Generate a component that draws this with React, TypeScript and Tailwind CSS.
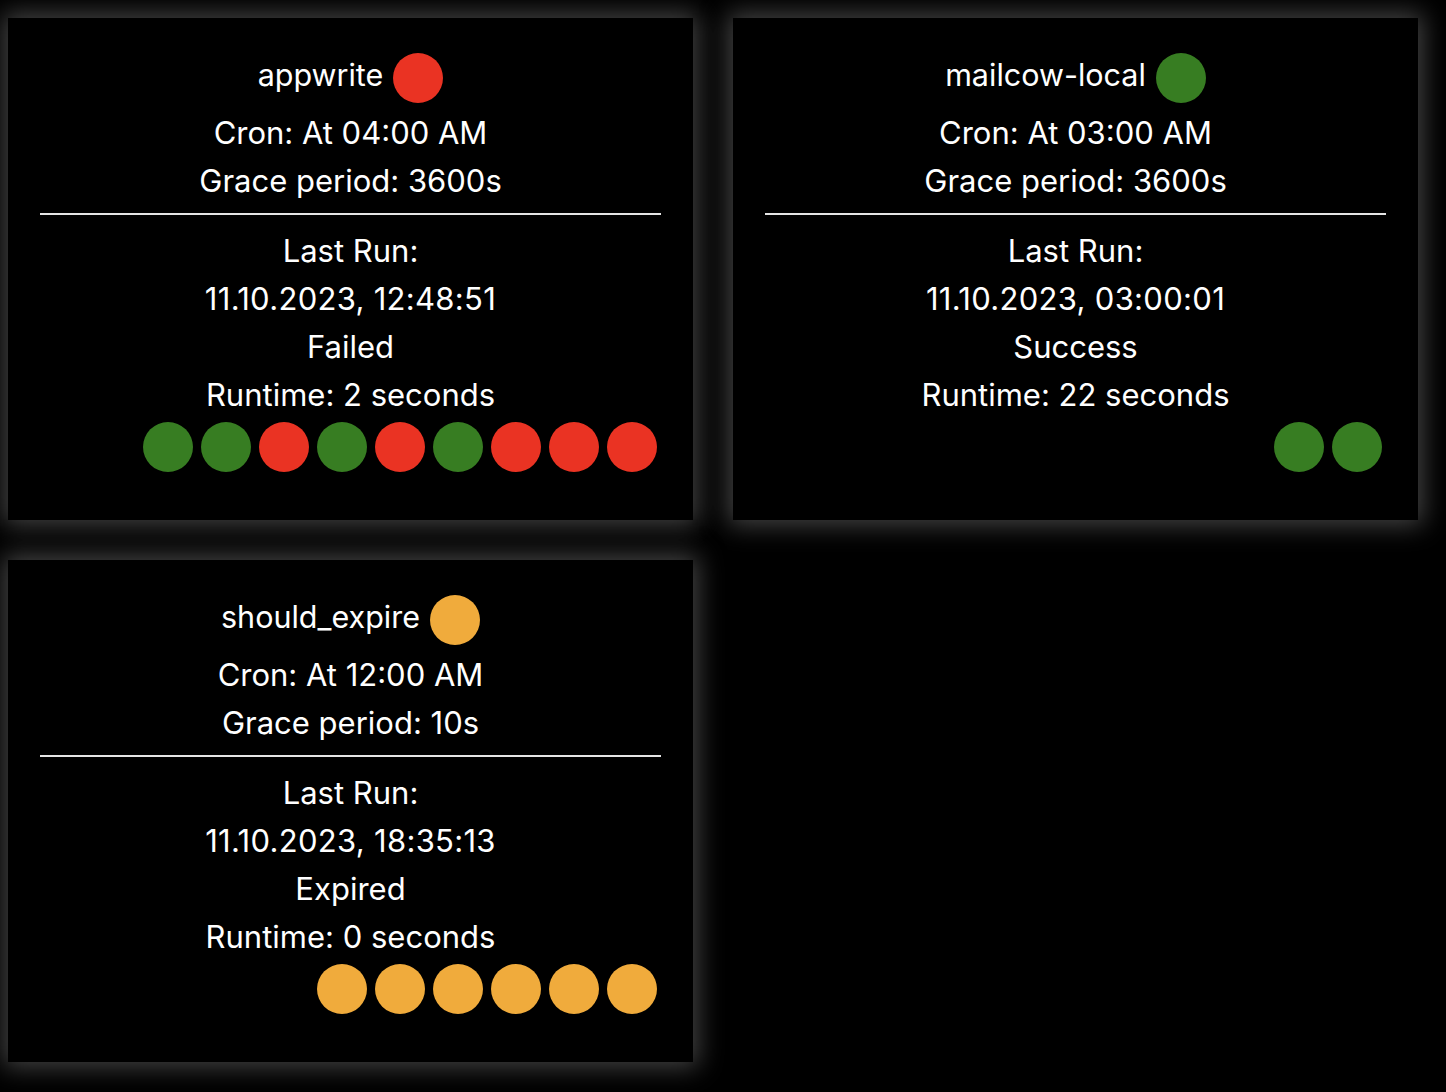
import React from "react";

type S = "ok" | "fail" | "exp";
const color: Record<S, string> = {
  ok: "bg-[#377d22]",
  fail: "bg-[#ea3323]",
  exp: "bg-[#f0ab3c]",
};

type Job = {
  name: string;
  status: S;
  cron: string;
  grace: string;
  last: string;
  result: string;
  runtime: string;
  history: S[];
};

const jobs: Job[] = [
  {
    name: "appwrite",
    status: "fail",
    cron: "Cron: At 04:00 AM",
    grace: "Grace period: 3600s",
    last: "11.10.2023, 12:48:51",
    result: "Failed",
    runtime: "Runtime: 2 seconds",
    history: ["ok", "ok", "fail", "ok", "fail", "ok", "fail", "fail", "fail"],
  },
  {
    name: "mailcow-local",
    status: "ok",
    cron: "Cron: At 03:00 AM",
    grace: "Grace period: 3600s",
    last: "11.10.2023, 03:00:01",
    result: "Success",
    runtime: "Runtime: 22 seconds",
    history: ["ok", "ok"],
  },
  {
    name: "should_expire",
    status: "exp",
    cron: "Cron: At 12:00 AM",
    grace: "Grace period: 10s",
    last: "11.10.2023, 18:35:13",
    result: "Expired",
    runtime: "Runtime: 0 seconds",
    history: ["exp", "exp", "exp", "exp", "exp", "exp"],
  },
];

function Card({ job }: { job: Job }) {
  return (
    <div className="h-[502px] bg-black shadow-[0_0_24px_5px_rgba(85,85,85,0.8)] px-8 pt-[35px] text-white text-center">
      <div className="h-[50px] flex items-center justify-center gap-[10px]">
        <span className="text-[30.5px] leading-none pb-[6px]">{job.name}</span>
        <span className={`w-[50px] h-[50px] rounded-full ${color[job.status]}`} />
      </div>
      <div className="mt-[6px] text-[31px] leading-[48px]">
        <div>{job.cron}</div>
        <div>{job.grace}</div>
      </div>
      <div className="mt-[8px] h-[2px] bg-[#e5e5e5]" />
      <div className="mt-[12px] text-[31px] leading-[48px]">
        <div>Last Run:</div>
        <div className="tracking-[0.3px]">{job.last}</div>
        <div>{job.result}</div>
        <div>{job.runtime}</div>
      </div>
      <div className="flex justify-end -mt-[1px]">
        {job.history.map((h, i) => (
          <span key={i} className={`m-[4px] w-[50px] h-[50px] rounded-full ${color[h]}`} />
        ))}
      </div>
    </div>
  );
}

export default function App() {
  return (
    <div
      className="min-h-[1092px] bg-black pl-[8px] pt-[18px]"
      style={{ fontFamily: "Inter, 'Noto Sans', sans-serif" }}
    >
      <div className="grid grid-cols-[685px_685px] gap-[40px]">
        {jobs.map((j) => (
          <Card key={j.name} job={j} />
        ))}
      </div>
    </div>
  );
}
